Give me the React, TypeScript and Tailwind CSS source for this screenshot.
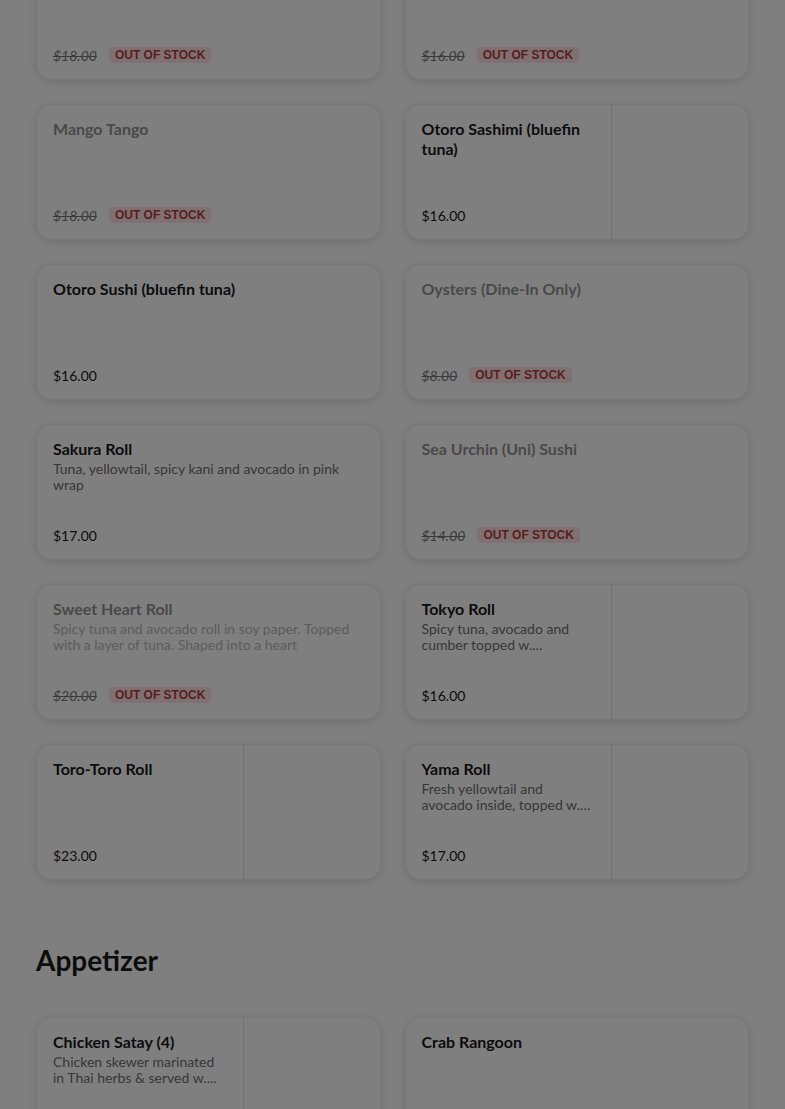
type Item = {
  name: string;
  description?: string;
  price: string;
  outOfStock?: boolean;
  image?: boolean;
};

const sushi: Item[] = [
  { name: "Lychee Roll", price: "$18.00", outOfStock: true },
  { name: "Mango Salmon Roll", price: "$16.00", outOfStock: true },
  { name: "Mango Tango", price: "$18.00", outOfStock: true },
  { name: "Otoro Sashimi (bluefin tuna)", price: "$16.00", image: true },
  { name: "Otoro Sushi (bluefin tuna)", price: "$16.00" },
  { name: "Oysters (Dine-In Only)", price: "$8.00", outOfStock: true },
  {
    name: "Sakura Roll",
    description: "Tuna, yellowtail, spicy kani and avocado in pink wrap",
    price: "$17.00",
  },
  { name: "Sea Urchin (Uni) Sushi", price: "$14.00", outOfStock: true },
  {
    name: "Sweet Heart Roll",
    description:
      "Spicy tuna and avocado roll in soy paper. Topped with a layer of tuna. Shaped into a heart",
    price: "$20.00",
    outOfStock: true,
  },
  {
    name: "Tokyo Roll",
    description: "Spicy tuna, avocado and cumber topped w....",
    price: "$16.00",
    image: true,
  },
  { name: "Toro-Toro Roll", price: "$23.00", image: true },
  {
    name: "Yama Roll",
    description: "Fresh yellowtail and avocado inside, topped w. spicy...",
    price: "$17.00",
    image: true,
  },
];

const appetizers: Item[] = [
  {
    name: "Chicken Satay (4)",
    description: "Chicken skewer marinated in Thai herbs & served w....",
    price: "$9.00",
    image: true,
  },
  { name: "Crab Rangoon", price: "$8.00" },
];

function MenuCard({ item }: { item: Item }) {
  return (
    <div className="flex h-[136px] overflow-hidden rounded-2xl border border-[#f1f1f1] bg-white shadow-[0_2px_8px_rgba(0,0,0,0.14)]">
      <div className="flex min-w-0 flex-1 flex-col justify-between px-4 pt-[14px] pb-[15px]">
        <div>
          <h3
            className={`text-[16px] font-bold leading-5 ${
              item.outOfStock ? "text-[#929292]" : "text-[#191919]"
            }`}
          >
            {item.name}
          </h3>
          {item.description && (
            <p
              className={`mt-[2px] line-clamp-2 text-[14px] leading-4 ${
                item.outOfStock ? "text-[#b8b8b8]" : "text-[#6f6f6f]"
              }`}
            >
              {item.description}
            </p>
          )}
        </div>
        <div className="flex h-[18px] items-center gap-3">
          {item.outOfStock ? (
            <>
              <span className="text-[14px] italic text-[#767676] line-through">
                {item.price}
              </span>
              <span className="rounded-[2px] bg-[#ffe3e3] px-1.5 text-[12px] font-bold leading-4 text-[#b43c3c] [font-family:'Liberation_Sans',Arial,sans-serif]">
                OUT OF STOCK
              </span>
            </>
          ) : (
            <span className="text-[14px] text-[#191919]">{item.price}</span>
          )}
        </div>
      </div>
      {item.image && (
        <div className="w-[137px] shrink-0 border-l border-[#e2e2e2] bg-white" />
      )}
    </div>
  );
}

export default function App() {
  return (
    <div className="relative h-[1109px] overflow-hidden bg-white [font-family:Lato,'Noto_Sans',sans-serif]">
      <div className="px-9">
        <div className="-mt-[56px] grid grid-cols-2 gap-6">
          {sushi.map((item) => (
            <MenuCard key={item.name} item={item} />
          ))}
        </div>

        <h2 className="mt-[64px] text-[28px] font-bold leading-8 text-[#191919]">
          Appetizer
        </h2>

        <div className="mt-[41px] grid grid-cols-2 gap-6">
          {appetizers.map((item) => (
            <MenuCard key={item.name} item={item} />
          ))}
        </div>
      </div>

      <div className="fixed inset-0 bg-black/50" />
    </div>
  );
}
